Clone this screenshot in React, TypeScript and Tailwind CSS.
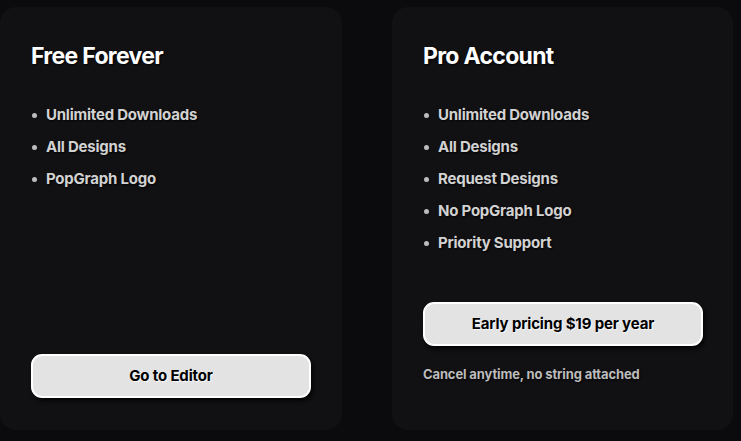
const FREE = ['Unlimited Downloads', 'All Designs', 'PopGraph Logo'];
const PRO = ['Unlimited Downloads', 'All Designs', 'Request Designs', 'No PopGraph Logo', 'Priority Support'];

const shadow = '[text-shadow:1px_1px_2px_rgba(0,0,0,0.9)]';

function Features({ items }: { items: string[] }) {
  return (
    <ul className="flex flex-col">
      {items.map((t) => (
        <li key={t} className={`flex items-center h-8 text-[15px] font-bold text-[#d2d2d2] tracking-[-0.015em] ${shadow}`}>
          <span className="w-[5px] h-[5px] rounded-full bg-[#bdbdbd] ml-[1px] mr-[9px]" />
          {t}
        </li>
      ))}
    </ul>
  );
}

function CtaButton({ label }: { label: string }) {
  return (
    <button className="w-[280px] h-[44px] rounded-[11px] bg-[#e3e3e3] border-2 border-white text-[15px] font-bold text-black tracking-[-0.01em] shadow-[2px_3px_4px_rgba(0,0,0,0.8)] [text-shadow:1px_1px_1px_rgba(255,255,255,0.8)]">
      {label}
    </button>
  );
}

export default function App() {
  return (
    <div
      className="w-[741px] h-[441px] bg-[#0b0b0d] flex gap-[50px] pt-[7px] pb-[11px] overflow-hidden"
      style={{ fontFamily: 'Inter, "Noto Sans", sans-serif' }}
    >
      <div className="w-[342px] rounded-2xl bg-[#111114] flex flex-col pl-[31px] pt-[33px] pb-[32px]">
        <h2 className={`text-[23px] leading-8 font-bold text-white tracking-[-0.03em] ${shadow}`}>Free Forever</h2>
        <div className="mt-[27px]">
          <Features items={FREE} />
        </div>
        <div className="mt-auto">
          <CtaButton label="Go to Editor" />
        </div>
      </div>

      <div className="w-[341px] rounded-2xl bg-[#111114] flex flex-col pl-[31px] pt-[33px]">
        <h2 className={`text-[23px] leading-8 font-bold text-white tracking-[-0.03em] ${shadow}`}>Pro Account</h2>
        <div className="mt-[27px]">
          <Features items={PRO} />
        </div>
        <div className="mt-[43px]">
          <CtaButton label="Early pricing $19 per year" />
        </div>
        <p className={`mt-[19px] text-[13px] font-bold text-[#bcbcbc] tracking-[-0.01em] ${shadow}`}>
          Cancel anytime, no string attached
        </p>
      </div>
    </div>
  );
}
